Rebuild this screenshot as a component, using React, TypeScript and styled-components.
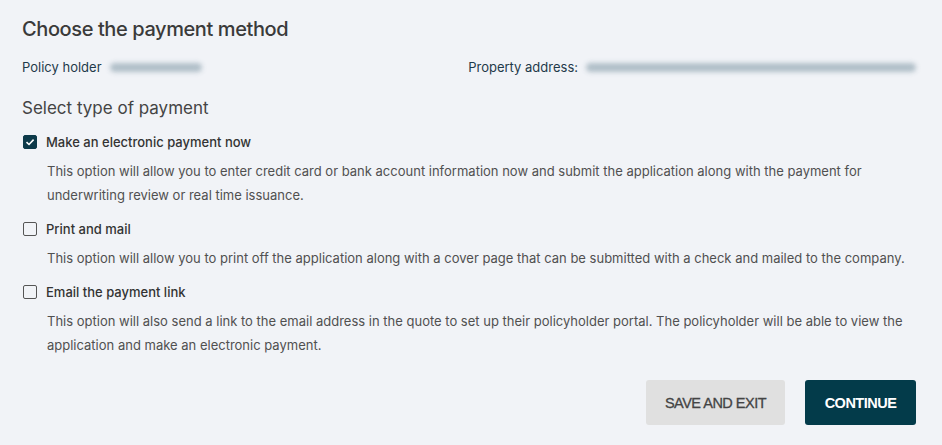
import React from "react";
import styled, { createGlobalStyle } from "styled-components";

const Global = createGlobalStyle`
  html, body { margin: 0; padding: 0; background: #f1f3f7; }
  body { font-family: Inter, "Noto Sans", sans-serif; }
  * { box-sizing: border-box; }
`;

const Page = styled.div`
  width: 942px;
  height: 445px;
  padding: 16px 26px 0 22px;
  background: #f1f3f7;
  display: flex;
  flex-direction: column;
`;

const Title = styled.h1`
  margin: 0;
  font-size: 20px;
  font-weight: 500;
  color: #3a3a3a;
  letter-spacing: -0.4px;
  line-height: 26px;
`;

const InfoRow = styled.div`
  display: flex;
  margin-top: 13px;
  height: 24px;
  align-items: center;
`;

const InfoItem = styled.div<{ $grow?: boolean }>`
  display: flex;
  align-items: center;
  gap: 8px;
  font-size: 13px;
  color: #1f3a4a;
  white-space: nowrap;
  flex: ${(p) => (p.$grow ? "0 0 447px" : "1")};
`;

const Blurred = styled.span<{ $w: number }>`
  display: inline-block;
  flex-shrink: 0;
  width: ${(p) => p.$w}px;
  height: 9px;
  border-radius: 5px;
  background: #a9b9c3;
  filter: blur(2.5px);
  opacity: 0.9;
`;

const SectionTitle = styled.h2`
  margin: 18px 0 0;
  font-size: 17px;
  font-weight: 400;
  color: #444;
  line-height: 22px;
`;

const Options = styled.div`
  display: flex;
  flex-direction: column;
  margin-top: 11px;
  gap: 10px;
`;

const Option = styled.div`
  display: flex;
  flex-direction: column;
`;

const LabelRow = styled.label`
  display: flex;
  align-items: center;
  gap: 9px;
  height: 24px;
  font-size: 13px;
  font-weight: 500;
  color: #333;
  padding-left: 1px;
`;

const Box = styled.span<{ $checked?: boolean }>`
  width: 14px;
  height: 14px;
  border-radius: 2px;
  border: 1.5px solid ${(p) => (p.$checked ? "#0d3a4a" : "#555")};
  background: ${(p) => (p.$checked ? "#0d3a4a" : "transparent")};
  display: inline-flex;
  align-items: center;
  justify-content: center;
`;

const Desc = styled.p`
  margin: 5px 0 0 25px;
  font-size: 13px;
  line-height: 24px;
  color: #505050;
  letter-spacing: 0;
  max-width: 870px;
`;

const Actions = styled.div`
  display: flex;
  justify-content: flex-end;
  gap: 20px;
  margin-top: 23px;
`;

const Button = styled.button<{ $primary?: boolean }>`
  height: 45px;
  border: none;
  border-radius: 3px;
  font-family: "Liberation Sans", Arial, sans-serif;
  font-size: 14.5px;
  font-weight: ${(p) => (p.$primary ? 700 : 400)};
  -webkit-text-stroke: ${(p) => (p.$primary ? "0" : "0.3px #444")};
  letter-spacing: -0.5px;
  padding: 0;
  background: ${(p) => (p.$primary ? "#033b4a" : "#e0e0e0")};
  color: ${(p) => (p.$primary ? "#fff" : "#444")};
  width: ${(p) => (p.$primary ? 111 : 139)}px;
`;

const Check = () => (
  <svg width="10" height="10" viewBox="0 0 10 10">
    <path d="M1.5 5.2 L4 7.5 L8.6 2.6" stroke="#fff" strokeWidth="1.6" fill="none" />
  </svg>
);

const options = [
  {
    label: "Make an electronic payment now",
    checked: true,
    desc: "This option will allow you to enter credit card or bank account information now and submit the application along with the payment for underwriting review or real time issuance.",
  },
  {
    label: "Print and mail",
    checked: false,
    desc: "This option will allow you to print off the application along with a cover page that can be submitted with a check and mailed to the company.",
  },
  {
    label: "Email the payment link",
    checked: false,
    desc: "This option will also send a link to the email address in the quote to set up their policyholder portal. The policyholder will be able to view the application and make an electronic payment.",
  },
];

export default function App() {
  return (
    <Page>
      <Global />
      <Title>Choose the payment method</Title>
      <InfoRow>
        <InfoItem>
          Policy holder <Blurred $w={92} />
        </InfoItem>
        <InfoItem $grow>
          Property address: <Blurred $w={330} />
        </InfoItem>
      </InfoRow>
      <SectionTitle>Select type of payment</SectionTitle>
      <Options>
        {options.map((o) => (
          <Option key={o.label}>
            <LabelRow>
              <Box $checked={o.checked}>{o.checked && <Check />}</Box>
              {o.label}
            </LabelRow>
            <Desc>{o.desc}</Desc>
          </Option>
        ))}
      </Options>
      <Actions>
        <Button>SAVE AND EXIT</Button>
        <Button $primary>CONTINUE</Button>
      </Actions>
    </Page>
  );
}
